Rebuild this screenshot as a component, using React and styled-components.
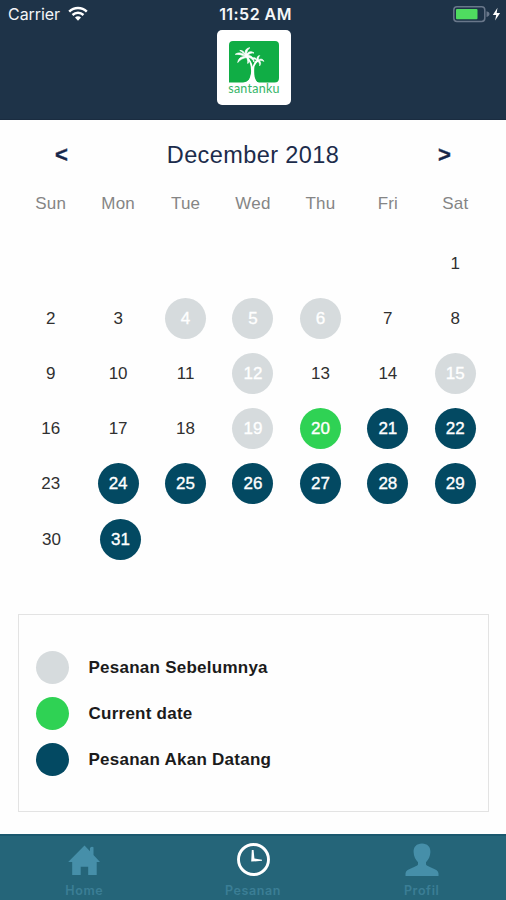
import styled, { createGlobalStyle } from "styled-components";

const GlobalStyle = createGlobalStyle`
  * {
    box-sizing: border-box;
  }
  body {
    margin: 0;
    background: #fefefe;
    font-family: "Liberation Sans", Arial, sans-serif;
  }
`;
const Screen = styled.div`
  display: flex;
  flex-direction: column;
  width: 506px;
  height: 900px;
  overflow: hidden;
  background: #fefefe;
`;
const Header = styled.header`
  height: 120px;
  background: #1e3348;
  border-bottom: 1px solid #1a2c40;
`;
const StatusBar = styled.div`
  display: grid;
  grid-template-columns: 1fr auto 1fr;
  align-items: center;
  height: 30px;
  padding: 0 5px 2px 8px;
  color: #f4f6f8;
  font-family: Inter, "Liberation Sans", sans-serif;
`;
const Carrier = styled.div`
  display: flex;
  align-items: center;
  gap: 8px;
  font-size: 16px;
  letter-spacing: -0.05px;
`;
const Time = styled.div`
  padding-left: 2px;
  font-size: 16px;
  font-weight: 600;
  letter-spacing: 0.45px;
`;
const Power = styled.div`
  display: flex;
  justify-content: flex-end;
  align-items: center;
`;
const Logo = styled.div`
  display: flex;
  flex-direction: column;
  align-items: center;
  width: 74px;
  height: 75px;
  margin: 0 auto 0 217px;
  padding-top: 11px;
  border-radius: 5px;
  background: #fff;
`;
const LogoText = styled.span`
  font-family: Lato, "DejaVu Sans", sans-serif;
  font-size: 12.5px;
  line-height: 12px;
  letter-spacing: 0.25px;
  color: #35b567;
`;
const Calendar = styled.main`
  height: 494px;
  padding: 0 17px;
`;
const MonthBar = styled.div`
  display: flex;
  align-items: center;
  justify-content: space-between;
  height: 70px;
  padding: 0 37px;
  color: #15264a;
`;
const MonthTitle = styled.h1`
  margin: 0;
  font-size: 23.5px;
  font-weight: 400;
  letter-spacing: 0.4px;
  color: #1c2c4b;
`;
const ArrowBtn = styled.button`
  width: 15px;
  padding: 0;
  border: none;
  background: transparent;
  color: inherit;
  font-family: inherit;
  font-size: 22px;
  font-weight: 700;
  -webkit-text-stroke: 0.4px currentColor;
`;
const Week = styled.div`
  display: grid;
  grid-template-columns: ${(props) =>
    props.$short ? "69px 69px" : "repeat(7, 1fr)"};
  height: ${(props) => (props.$head ? "45.5px" : "55.2px")};
  justify-items: center;
  align-items: ${(props) => (props.$head ? "start" : "center")};
`;
const WeekDay = styled.span`
  margin-top: 4px;
  font-size: 17px;
  line-height: 20px;
  letter-spacing: 0.2px;
  color: #858585;
`;
const dayColors = {
  past: "#d6dbdd",
  today: "#2fd254",
  next: "#034962",
};
const Day = styled.span`
  display: flex;
  align-items: center;
  justify-content: center;
  width: 41px;
  height: 41px;
  padding-top: 1px;
  border-radius: 50%;
  font-size: 17px;
  color: ${(props) => (props.$type ? "#fff" : "#303030")};
  background: ${(props) => dayColors[props.$type] || "transparent"};
  -webkit-text-stroke: ${(props) => (props.$type ? "0.35px #fff" : "0")};
`;
const Legend = styled.section`
  display: flex;
  flex-direction: column;
  gap: 13.3px;
  width: 471px;
  height: 198px;
  margin-left: 18px;
  padding: 35.5px 16.5px;
  border: 1px solid #e3e3e3;
`;
const LegendRow = styled.div`
  display: flex;
  align-items: center;
  gap: 20px;
  font-size: 17px;
  font-weight: 700;
  letter-spacing: 0.25px;
  color: #1b1b1b;
`;
const LegendLabel = styled.span`
  padding-top: 1.5px;
`;
const Dot = styled.span`
  width: 33px;
  height: 33px;
  border-radius: 50%;
  background: ${(props) => dayColors[props.$type]};
`;
const TabBar = styled.nav`
  display: grid;
  grid-template-columns: repeat(3, 1fr);
  height: 66px;
  margin-top: auto;
  border-top: 2px solid #1a586e;
  background: #256579;
`;
const Tab = styled.div`
  display: flex;
  flex-direction: column;
  align-items: center;
  padding-top: 6px;
  color: ${(props) => (props.$active ? "#fff" : "#468fa9")};
`;
const TabLabel = styled.span`
  margin-top: 7px;
  font-family: Inter, "Liberation Sans", sans-serif;
  font-size: 12.5px;
  font-weight: 600;
  line-height: 16px;
  letter-spacing: 0.6px;
  color: #3b7e95;
`;

const weekDays = ["Sun", "Mon", "Tue", "Wed", "Thu", "Fri", "Sat"];
const weeks = [
  ["", "", "", "", "", "", 1],
  [2, 3, 4, 5, 6, 7, 8],
  [9, 10, 11, 12, 13, 14, 15],
  [16, 17, 18, 19, 20, 21, 22],
  [23, 24, 25, 26, 27, 28, 29],
  [30, 31],
];
const pastOrders = [4, 5, 6, 12, 15, 19];
const nextOrders = [21, 22, 24, 25, 26, 27, 28, 29, 31];

const getType = (day) => {
  if (day === 20) return "today";
  if (pastOrders.includes(day)) return "past";
  if (nextOrders.includes(day)) return "next";
  return undefined;
};

const WifiIcon = () => (
  <svg width="20" height="16" viewBox="0 0 20 16" fill="none" stroke="#fff">
    <path d="M1.2 5.6C6.2.8 13.8.8 18.8 5.6" strokeWidth="2.5" />
    <path d="M4.5 9C7.7 6 12.3 6 15.5 9" strokeWidth="2.4" />
    <path d="M7 11.5C8.8 9.9 11.2 9.9 13 11.5L10 14.8Z" fill="#fff" stroke="none" />
  </svg>
);

const BatteryIcon = () => (
  <svg width="48" height="18" viewBox="0 0 48 18">
    <rect x=".8" y="1.8" width="31" height="14.6" rx="3.2" fill="none" stroke="#69778a" strokeWidth="1.5" />
    <rect x="3" y="4" width="21.5" height="10.2" rx="1" fill="#4fdc60" />
    <path d="M33.5 6.3q3 .6 3 2.8t-3 2.8Z" fill="#69778a" />
    <path d="M44.5 2.8 39.8 10h3.4l-1.1 5.4 5-7.4h-3.4Z" fill="#fff" />
  </svg>
);

const PalmLogo = () => (
  <svg width="50" height="42" viewBox="0 0 50 42">
    <path d="M4 0H46Q50 0 50 4V37Q50 41.5 45.5 41.5H30Q24.5 41 24.5 35L22 33Q21.5 41 14 41.5H0V4Q0 0 4 0Z" fill="#10ad45" />
    <g fill="#fff">
      <path d="M17 15C12.5 11 9 11.5 6.3 13.3 10 13 13 14 17 15.5 12 15.5 9.5 17 8.8 21.5 11 18.5 14 17 17.5 16.5 18.5 18 19 20 18.8 22.5 20.8 19.5 20 17.5 19 16 22 16.8 24 18.5 25 21 25 17 23 14.5 18.8 14.5 20.5 12.5 22.5 11.5 25 12 21.5 9.5 18.8 11.2 17.8 13.3 17.6 10.5 18.5 8.5 20.8 6.8 17 7.2 15.5 10 16.5 13.5 14.8 10.5 13 9 10.8 9.5 13.5 10.8 15 12.5 17 15Z" stroke="#fff" strokeWidth=".8" />
      <path d="M28 18.8C26.5 16.2 24.5 16 22.8 17.8 25 17.8 26.5 18.5 27.5 19.5 25.8 20.3 25 22 25.6 24.5 26.5 22.5 27.5 21.3 29 20.5 30 21.5 30.8 22.8 30.6 25 32.3 22.8 31.8 21 30.5 19.8 32 19.3 33.5 19.5 35 20.5 34 17.8 31.8 17.5 29.7 18.7 29.2 17 29.8 15.8 30.8 14.5 28.3 14.8 27.6 16.5 28 18.8Z" stroke="#fff" strokeWidth=".5" />
      <path d="M18 15.5C21.5 19 23.2 22 23.6 25.8 24.2 22.8 26 21 28.5 19.5L29.3 20.3C26 22.5 25.2 25 25.2 29 25 35 26 39 29 42H16C20 40 21.5 36.5 22 32 22.5 25 20.8 20 17 16Z" />
    </g>
  </svg>
);

const HomeIcon = () => (
  <svg width="34" height="34" viewBox="0 0 34 34" fill="currentColor">
    <path d="M17.5 3.5 23 9.3V6Q24.8 4 26.5 5.3V13L33 20H29.7V33H21.2V24.8H13.7V33H5.2V20H1.2Z" />
  </svg>
);

const ClockIcon = () => (
  <svg width="36" height="34" viewBox="0 0 36 34" fill="none" stroke="currentColor">
    <circle cx="18.5" cy="17.5" r="15" strokeWidth="2.9" />
    <path d="M16.2 19.6 16.8 8H18.6L19.4 16.4 27 17.7V18.8Z" fill="currentColor" stroke="none" />
  </svg>
);

const ProfileIcon = () => (
  <svg width="34" height="34" viewBox="0 0 34 34" fill="currentColor">
    <path d="M17 1.5C22.5 1.5 25.6 5 25.4 10C25.2 14.5 23.7 17.5 21 20.2V22.5C22 25.3 33.5 26.4 33.5 31.5V34H.5V31.5C.5 26.4 12 25.3 13 22.5V20.2C10.3 17.5 8.8 14.5 8.6 10C8.4 5 11.5 1.5 17 1.5Z" />
  </svg>
);

export default function App() {
  return (
    <Screen>
      <GlobalStyle />
      <Header>
        <StatusBar>
          <Carrier>
            Carrier <WifiIcon />
          </Carrier>
          <Time>11:52 AM</Time>
          <Power>
            <BatteryIcon />
          </Power>
        </StatusBar>
        <Logo>
          <PalmLogo />
          <LogoText>santanku</LogoText>
        </Logo>
      </Header>
      <Calendar>
        <MonthBar>
          <ArrowBtn>&lt;</ArrowBtn>
          <MonthTitle>December 2018</MonthTitle>
          <ArrowBtn>&gt;</ArrowBtn>
        </MonthBar>
        <Week $head>
          {weekDays.map((name) => (
            <WeekDay key={name}>{name}</WeekDay>
          ))}
        </Week>
        {weeks.map((week, i) => (
          <Week key={i} $short={week.length < 7}>
            {week.map((day, j) => (
              <Day key={j} $type={getType(day)}>
                {day}
              </Day>
            ))}
          </Week>
        ))}
      </Calendar>
      <Legend>
        <LegendRow>
          <Dot $type="past" />
          <LegendLabel>Pesanan Sebelumnya</LegendLabel>
        </LegendRow>
        <LegendRow>
          <Dot $type="today" />
          <LegendLabel>Current date</LegendLabel>
        </LegendRow>
        <LegendRow>
          <Dot $type="next" />
          <LegendLabel>Pesanan Akan Datang</LegendLabel>
        </LegendRow>
      </Legend>
      <TabBar>
        <Tab>
          <HomeIcon />
          <TabLabel>Home</TabLabel>
        </Tab>
        <Tab $active>
          <ClockIcon />
          <TabLabel>Pesanan</TabLabel>
        </Tab>
        <Tab>
          <ProfileIcon />
          <TabLabel>Profil</TabLabel>
        </Tab>
      </TabBar>
    </Screen>
  );
}
